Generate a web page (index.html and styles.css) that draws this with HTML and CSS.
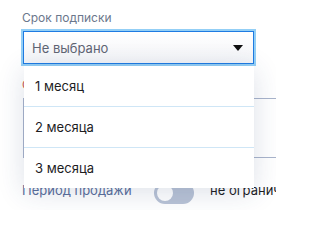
FILE: index.html
```html
<!DOCTYPE html>
<html lang="ru">
<head>
<meta charset="utf-8">
<link rel="stylesheet" href="styles.css">
</head>
<body>
<div class="page">
  <div class="field">
    <div class="label">Срок подписки</div>
    <div class="select-wrap">
      <div class="select">
        <span class="select-value">Не выбрано</span>
        <svg class="arrow" width="10" height="6" viewBox="0 0 10 6"><path d="M0 0H10L5 6Z" fill="#111"/></svg>
      </div>
      <ul class="menu">
        <li class="menu-item">1 месяц</li>
        <li class="menu-item">2 месяца</li>
        <li class="menu-item">3 месяца</li>
      </ul>
    </div>
  </div>
  <div class="field field-second">
    <div class="label label-error">Стоимость</div>
    <div class="box"></div>
  </div>
  <div class="row">
    <span class="row-label">Период продажи</span>
    <span class="toggle"><span class="knob"></span></span>
    <span class="row-value">не ограничен</span>
  </div>
</div>
</body>
</html>
```

FILE: styles.css
```css
html, body {
  margin: 0;
  padding: 0;
  background: #fff;
  overflow: hidden;
}
body {
  font-family: Inter, "Noto Sans", sans-serif;
  width: 276px;
  height: 210px;
}
.page {
  padding: 10px 0 0 23px;
}
.label {
  font-size: 12px;
  line-height: 16px;
  color: #6b778c;
  margin-left: -1px;
  white-space: nowrap;
}
.label-error {
  color: #c9564f;
}
.select-wrap {
  position: relative;
  margin-top: 5px;
  width: 231px;
}
.select {
  box-sizing: border-box;
  height: 33px;
  border: 1px solid #1f7be2;
  box-shadow: 0 0 0 2px #93cff6;
  background: linear-gradient(#ffffff, #f3f4f7);
  display: flex;
  align-items: center;
  justify-content: space-between;
  padding: 0 10px 0 8px;
}
.select-value {
  font-size: 13px;
  color: #5f6574;
}
.arrow {
  display: block;
  margin-top: 1px;
}
.menu {
  position: absolute;
  top: 35px;
  left: 1px;
  width: 230px;
  margin: 0;
  padding: 0;
  list-style: none;
  background: #fff;
  box-shadow: 0 4px 26px rgba(40, 60, 110, 0.16);
  z-index: 10;
}
.menu-item {
  box-sizing: border-box;
  height: 41px;
  line-height: 40px;
  padding-left: 11px;
  font-size: 13px;
  color: #1d1d1f;
  border-bottom: 1px solid #cfe6f6;
}
.menu-item:last-child {
  border-bottom: none;
  height: 40px;
}
.field-second {
  margin-top: 13px;
}
.box {
  margin-top: 5px;
  height: 60px;
  box-sizing: border-box;
  border: 1px solid #a9b4cb;
  border-right: none;
  width: 260px;
}
.row {
  display: flex;
  align-items: flex-start;
  margin-top: 24px;
  margin-left: -1px;
  white-space: nowrap;
}
.row-label {
  flex: none;
  font-size: 13px;
  line-height: 16px;
  color: #5a6e9b;
  width: 132px;
}
.toggle {
  position: relative;
  flex: none;
  width: 40px;
  height: 22px;
  border-radius: 11px;
  background: #b9c3d6;
}
.knob {
  position: absolute;
  left: 3px;
  top: 3px;
  width: 16px;
  height: 16px;
  border-radius: 50%;
  background: #fff;
}
.row-value {
  flex: none;
  font-size: 13px;
  line-height: 16px;
  color: #1d1d1f;
  margin-left: 16px;
}
```
